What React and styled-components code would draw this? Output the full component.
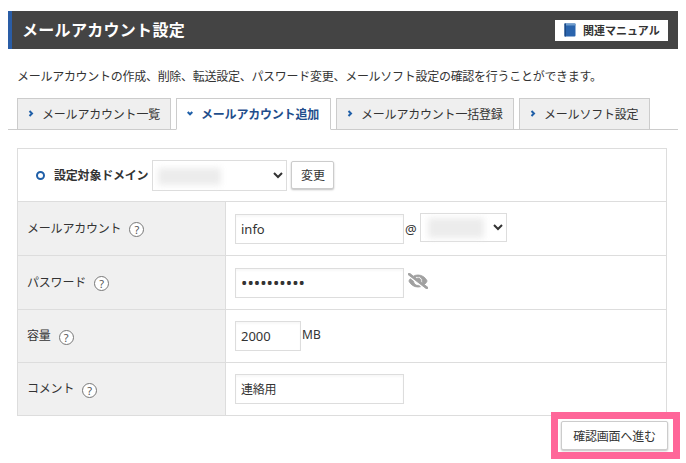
import React from 'react';
import styled, { createGlobalStyle } from 'styled-components';
import { FaEyeSlash } from 'react-icons/fa';

const Global = createGlobalStyle`
  html, body { margin: 0; padding: 0; background: #fff; }
  body { font-family: "Noto Sans", "Noto Sans CJK JP", sans-serif; font-size: 12px; letter-spacing: -0.2px; color: #333; }
`;
const Page = styled.div`
  position: relative;
  width: 686px;
  height: 463px;
  overflow: hidden;
  padding: 11px 8px 0;
  box-sizing: border-box;
`;
const Header = styled.header`
  display: flex;
  align-items: center;
  justify-content: space-between;
  height: 38px;
  background: #444;
  border-left: 4px solid #2a5da6;
  padding: 0 10px;
`;
const Title = styled.h1`
  margin: 0;
  color: #fff;
  font-size: 16px;
  font-weight: 700;
  letter-spacing: 0.3px;
  line-height: 1;
`;
const ManualLink = styled.a`
  display: flex;
  align-items: center;
  gap: 7px;
  height: 21px;
  width: 113px;
  box-sizing: border-box;
  padding-left: 9px;
  background: #fff;
  color: #333;
  font-size: 11px;
  font-weight: 700;
  letter-spacing: 0;
  white-space: nowrap;
`;
const Description = styled.p`
  margin: 0;
  height: 49px;
  padding: 19px 0 0 9px;
  box-sizing: border-box;
  line-height: 17px;
  font-size: 12px;
  letter-spacing: -0.28px;
  white-space: nowrap;
`;
const TabBar = styled.nav`
  display: flex;
  gap: 5px;
  height: 32px;
  box-sizing: border-box;
  padding-left: 9px;
  border-bottom: 1px solid #ccc;
`;
const Tab = styled.div`
  display: flex;
  align-items: center;
  width: ${p => p.$width}px;
  height: 32px;
  box-sizing: border-box;
  gap: 8px;
  padding: 0 0 1px 10px;
  border: 1px solid #ccc;
  border-bottom: ${p => (p.$active ? '1px solid #fff' : '1px solid #ccc')};
  background: ${p => (p.$active ? '#fff' : '#efefef')};
  color: ${p => (p.$active ? '#1f4e8c' : '#333')};
  font-weight: ${p => (p.$active ? 700 : 400)};
  white-space: nowrap;
`;
const Panel = styled.section`
  margin: 18px 11px 0 9px;
  border: 1px solid #ddd;
  border-bottom: 0;
`;
const DomainRow = styled.div`
  display: flex;
  align-items: center;
  height: 53px;
  box-sizing: border-box;
  padding-left: 18px;
  border-bottom: 1px solid #ddd;
`;
const Ring = styled.span`
  width: 9px;
  height: 9px;
  box-sizing: border-box;
  border: 2.5px solid #1f5fa8;
  border-radius: 50%;
  margin-right: 9px;
`;
const DomainLabel = styled.span`
  font-weight: 700;
  margin-right: 4px;
  white-space: nowrap;
`;
const SelectWrap = styled.span`
  position: relative;
  display: inline-flex;
  margin-bottom: ${p => p.$lift || 0}px;
`;
const Select = styled.select`
  width: ${p => p.$width}px;
  height: ${p => p.$height}px;
  box-sizing: border-box;
  border: 1px solid #ddd;
  border-radius: 0;
  background: #fff;
  color: #333;
  font-family: inherit;
  font-size: 12px;
`;
const Blur = styled.span`
  position: absolute;
  left: ${p => p.$left}px;
  top: ${p => p.$top}px;
  width: ${p => p.$width}px;
  height: ${p => p.$height}px;
  background: #ececec;
  filter: blur(3px);
  pointer-events: none;
`;
const Button = styled.button`
  height: ${p => p.$height}px;
  width: ${p => p.$width}px;
  padding: 0;
  border: 1px solid #ccc;
  border-radius: 2px;
  background: #fff;
  box-shadow: 0 1px 2px rgba(0, 0, 0, 0.25);
  color: #333;
  font-family: inherit;
  font-size: 12px;
  letter-spacing: -0.2px;
  white-space: nowrap;
`;
const ChangeButton = styled(Button)`
  margin-left: 4px;
`;
const Row = styled.div`
  display: grid;
  grid-template-columns: 208px 1fr;
  height: ${p => p.$height}px;
  box-sizing: border-box;
  border-bottom: 1px solid #ddd;
`;
const Label = styled.div`
  display: flex;
  align-items: center;
  gap: 8px;
  padding-left: 9px;
  background: #f0f0f0;
  border-right: 1px solid #ddd;
`;
const LabelText = styled.span`
  position: relative;
  top: -1px;
  white-space: nowrap;
`;
const Help = styled.span`
  width: 15px;
  height: 15px;
  box-sizing: border-box;
  display: grid;
  place-items: center;
  position: relative;
  top: 1px;
  border: 1.5px solid #777;
  border-radius: 50%;
  background: #fff;
  color: #555;
  font-size: 11px;
  letter-spacing: 0;
  line-height: 1;
`;
const Cell = styled.div`
  display: flex;
  align-items: center;
  padding-left: 9px;
`;
const TextInput = styled.input`
  width: ${p => p.$width}px;
  height: 30px;
  box-sizing: border-box;
  border: 1px solid #ddd;
  box-shadow: inset 0 2px 2px rgba(0, 0, 0, 0.03);
  padding: 0 5px;
  outline: none;
  color: #333;
  font-family: inherit;
  font-size: ${p => p.$size || 13}px;
  letter-spacing: ${p => (p.$size === 12 ? '-0.2px' : '0')};
`;
const AtSign = styled.span`
  margin: 0 3px 0 1px;
  font-size: 13px;
  letter-spacing: 0;
`;
const Unit = styled.span`
  align-self: flex-start;
  margin: 16px 0 0 1px;
  font-size: 12px;
  letter-spacing: 0;
`;
const EyeIcon = styled(FaEyeSlash)`
  margin: -3px 0 0 4px;
  width: 20px;
  height: 16px;
  color: #a0a0a0;
  stroke: currentColor;
  stroke-width: 28px;
`;
const Footer = styled.div`
  display: flex;
  justify-content: flex-end;
  padding: 5px 10px 0 0;
`;
const Highlight = styled.div`
  position: absolute;
  left: 551px;
  top: 412px;
  width: 129px;
  height: 47px;
  box-sizing: border-box;
  border: 7px solid #ff6699;
  pointer-events: none;
`;

const BookIcon = () => (
  <svg width="12" height="14" viewBox="0 0 12 14" aria-hidden="true">
    <rect x="0.5" y="0.5" width="11" height="13" rx="1" fill="#2a64ad" />
    <rect x="0.5" y="0.5" width="11" height="2" fill="#6f9ccc" />
    <rect x="0.5" y="0.5" width="1.5" height="13" fill="#1d4a85" />
  </svg>
);
const Chevron = ({ open }) => (
  <svg width="6" height="7" viewBox="0 0 6 7" aria-hidden="true" style={{ flex: 'none' }}>
    {open
      ? <path d="M0.7 2 L3 4.3 L5.3 2" fill="none" stroke="#1f5fa8" strokeWidth="2" />
      : <path d="M1.5 1 L4 3.5 L1.5 6" fill="none" stroke="#1f5fa8" strokeWidth="2" />}
  </svg>
);

const tabs = [
  { label: 'メールアカウント一覧', width: 154 },
  { label: 'メールアカウント追加', width: 155, active: true },
  { label: 'メールアカウント一括登録', width: 178 },
  { label: 'メールソフト設定', width: 131 },
];

const FormRow = ({ label, height, children }) => (
  <Row $height={height}>
    <Label>
      <LabelText>{label}</LabelText>
      <Help>?</Help>
    </Label>
    <Cell>{children}</Cell>
  </Row>
);

export default function App() {
  return (
    <Page>
      <Global />
      <Header>
        <Title>メールアカウント設定</Title>
        <ManualLink>
          <BookIcon />
          関連マニュアル
        </ManualLink>
      </Header>
      <Description>
        メールアカウントの作成、削除、転送設定、パスワード変更、メールソフト設定の確認を行うことができます。
      </Description>
      <TabBar>
        {tabs.map(t => (
          <Tab key={t.label} $width={t.width} $active={t.active}>
            <Chevron open={t.active} />
            {t.label}
          </Tab>
        ))}
      </TabBar>
      <Panel>
        <DomainRow>
          <Ring />
          <DomainLabel>設定対象ドメイン</DomainLabel>
          <SelectWrap>
            <Select $width={135} $height={31} defaultValue=""><option value=""></option></Select>
            <Blur $left={6} $top={8} $width={63} $height={17} />
          </SelectWrap>
          <ChangeButton $width={43} $height={28}>変更</ChangeButton>
        </DomainRow>
        <FormRow label="メールアカウント" height={54}>
          <TextInput $width={169} defaultValue="info" />
          <AtSign>@</AtSign>
          <SelectWrap $lift={2}>
            <Select $width={87} $height={29} defaultValue=""><option value=""></option></Select>
            <Blur $left={8} $top={5} $width={56} $height={20} />
          </SelectWrap>
        </FormRow>
        <FormRow label="パスワード" height={54}>
          <TextInput $width={169} $size={17} type="password" defaultValue="0123456789" />
          <EyeIcon />
        </FormRow>
        <FormRow label="容量" height={53}>
          <TextInput $width={66} defaultValue="2000" />
          <Unit>MB</Unit>
        </FormRow>
        <FormRow label="コメント" height={53}>
          <TextInput $width={169} $size={12} defaultValue="連絡用" />
        </FormRow>
      </Panel>
      <Footer>
        <Button $width={107} $height={29}>確認画面へ進む</Button>
      </Footer>
      <Highlight />
    </Page>
  );
}
